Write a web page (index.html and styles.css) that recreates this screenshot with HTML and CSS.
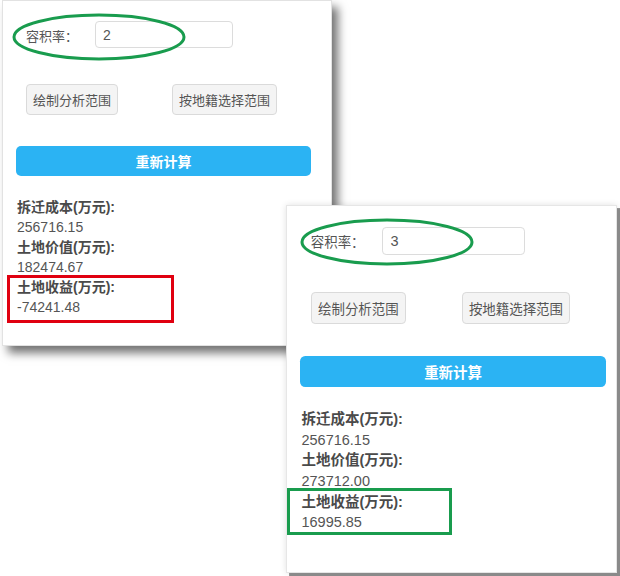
FILE: index.html
```html
<!DOCTYPE html>
<html lang="zh-CN">
<head>
    <meta charset="UTF-8">
    <meta name="viewport" content="width=device-width, initial-scale=1.0">
    <title>容积率对比</title>
    <link rel="stylesheet" href="styles.css">
</head>
<body>
    <div class="canvas">
        <div class="window window-a">
            <div class="panel">
                <div class="field">
                    <label class="field-label">容积率：</label>
                    <input class="field-input" type="text" value="2">
                </div>
                <div class="tools">
                    <button class="tool-btn">绘制分析范围</button>
                    <button class="tool-btn">按地籍选择范围</button>
                </div>
                <button class="calc-btn">重新计算</button>
                <dl class="results">
                    <dt>拆迁成本(万元):</dt>
                    <dd>256716.15</dd>
                    <dt>土地价值(万元):</dt>
                    <dd>182474.67</dd>
                    <dt>土地收益(万元):</dt>
                    <dd>-74241.48</dd>
                </dl>
            </div>
        </div>

        <div class="window window-b">
            <div class="panel panel-zoom">
                <div class="field">
                    <label class="field-label">容积率：</label>
                    <input class="field-input" type="text" value="3">
                </div>
                <div class="tools">
                    <button class="tool-btn">绘制分析范围</button>
                    <button class="tool-btn">按地籍选择范围</button>
                </div>
                <button class="calc-btn">重新计算</button>
                <dl class="results">
                    <dt>拆迁成本(万元):</dt>
                    <dd>256716.15</dd>
                    <dt>土地价值(万元):</dt>
                    <dd>273712.00</dd>
                    <dt>土地收益(万元):</dt>
                    <dd>16995.85</dd>
                </dl>
            </div>
        </div>

        <!-- annotation marks drawn over the screenshots -->
        <svg class="marks" width="620" height="576" viewBox="0 0 620 576">
            <ellipse cx="99" cy="37" rx="85" ry="22" class="mark-green"/>
            <ellipse cx="387" cy="242" rx="85" ry="22" class="mark-green"/>
            <rect x="8.5" y="276.5" width="164" height="45" class="mark-red"/>
            <rect x="288.5" y="489.5" width="162" height="44" class="mark-green"/>
        </svg>
    </div>
</body>
</html>
```

FILE: styles.css
```css
body {
    margin: 0;
    background-color: #fff;
    font-family: 'Liberation Sans', 'Noto Sans CJK SC', sans-serif;
}

.canvas {
    position: relative;
    width: 620px;
    height: 576px;
    overflow: hidden;
}

.window {
    position: absolute;
}

.window-a {
    left: 2px;
    top: 0;
}

.window-b {
    left: 286px;
    top: 205px;
}

.panel {
    box-sizing: border-box;
    width: 330px;
    height: 346px;
    padding-top: 20px;
    background-color: #fff;
    border: 1px solid #e2e2e2;
    box-shadow: 6px 7px 9px rgba(0, 0, 0, 0.55);
}

.panel-zoom {
    zoom: 1.035;
    width: 320px;
    height: 356px;
    border-color: #e6e6e6;
    box-shadow: 3px 3px 0 #8a8a8a, 0 0 6px rgba(0, 0, 0, 0.12);
}

.field {
    display: flex;
    align-items: center;
    height: 27px;
    padding-left: 23px;
}

.field-label {
    width: 69px;
    font-size: 13px;
    line-height: 27px;
    padding-top: 4px;
    color: #555;
}

.field-input {
    box-sizing: border-box;
    width: 138px;
    height: 27px;
    padding: 0 7px;
    border: 1px solid #dcdcdc;
    border-radius: 4px;
    font-family: 'Liberation Sans', sans-serif;
    font-size: 14px;
    color: #555;
    outline: none;
}

.tools {
    display: flex;
    gap: 54px;
    margin-top: 36px;
    padding-left: 23px;
}

.tool-btn {
    height: 31px;
    padding: 0 6px;
    background-color: #f4f4f4;
    border: 1px solid #dadada;
    border-radius: 4px;
    font-family: 'Liberation Sans', 'Noto Sans CJK SC', sans-serif;
    font-size: 13px;
    color: #555;
}

.calc-btn {
    display: block;
    width: 295px;
    height: 30px;
    margin: 31px 0 0 13px;
    background-color: #2bb3f3;
    border: none;
    border-radius: 5px;
    font-family: 'Liberation Sans', 'Noto Sans CJK SC', sans-serif;
    font-size: 14px;
    font-weight: bold;
    color: #fff;
}

.results {
    margin: 21px 0 0 14px;
    font-size: 14px;
    line-height: 20px;
    color: #555;
}

.results dt {
    font-weight: bold;
    color: #4a4a4a;
}

.results dd {
    margin: 0;
}

.marks {
    position: absolute;
    left: 0;
    top: 0;
    pointer-events: none;
}

.mark-green {
    fill: none;
    stroke: #199c4e;
    stroke-width: 3;
}

.mark-red {
    fill: none;
    stroke: #e00010;
    stroke-width: 3;
}
```
